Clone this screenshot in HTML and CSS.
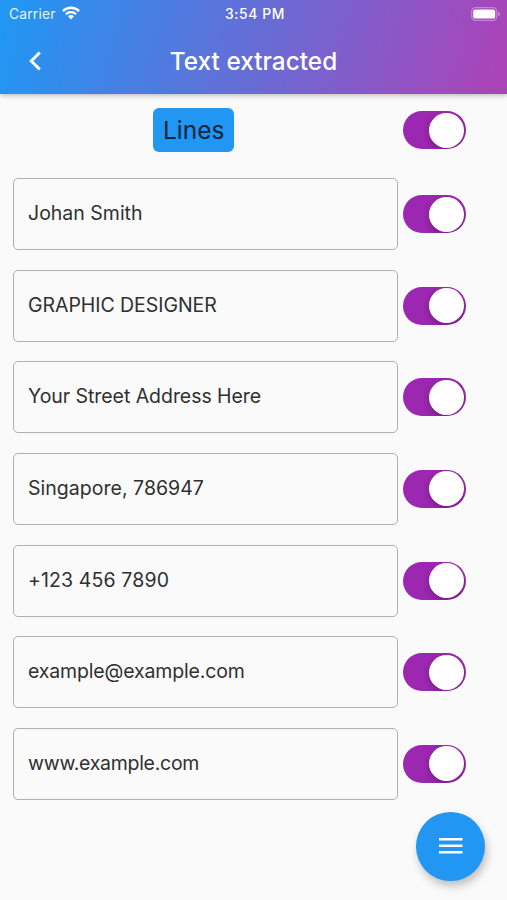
FILE: index.html
```html
<!DOCTYPE html>
<html lang="en">
<head>
<meta charset="utf-8">
<title>Text extracted</title>
<link rel="stylesheet" href="styles.css">
</head>
<body>
<div class="screen">
  <header class="header">
    <div class="status">
      <div class="carrier"><span>Carrier</span>
        <svg class="wifi" width="18" height="14" viewBox="0 0 18 14"><g fill="none" stroke="#fff" stroke-width="2.3"><path d="M.9 5.1a11.5 11.5 0 0 1 16.2 0"/><path d="M3.9 8.3a7.2 7.2 0 0 1 10.2 0"/></g><path fill="#fff" d="M6 10.3a4.2 4.2 0 0 1 6 0L9 13.4z"/></svg>
      </div>
      <span class="time">3:54 PM</span>
      <svg class="battery" width="30" height="14" viewBox="0 0 30 14"><rect x=".7" y=".7" width="25" height="12.6" rx="3.7" fill="none" stroke="#fff" stroke-opacity=".35" stroke-width="1.2"/><rect x="2.2" y="2.4" width="22" height="9.2" rx="2.2" fill="#fff"/><path d="M27.2 4.8c2.5.8 2.5 3.6 0 4.4z" fill="#fff" fill-opacity=".4"/></svg>
    </div>
    <div class="titlebar">
      <svg class="back" width="14" height="20" viewBox="0 0 14 20"><path d="M11.8 1.5 3.3 10l8.5 8.5" fill="none" stroke="#fff" stroke-width="3"/></svg>
      <h1 class="title">Text extracted</h1>
    </div>
  </header>
  <main class="content">
    <div class="row top"><div class="tag-area"><span class="tag">Lines</span></div><span class="toggle"></span></div>
    <div class="row"><div class="field"><span class="name">Johan Smith</span></div><span class="toggle"></span></div>
    <div class="row"><div class="field"><span class="job">GRAPHIC DESIGNER</span></div><span class="toggle"></span></div>
    <div class="row"><div class="field"><span class="street">Your Street Address Here</span></div><span class="toggle"></span></div>
    <div class="row"><div class="field"><span class="city">Singapore, 786947</span></div><span class="toggle"></span></div>
    <div class="row"><div class="field"><span class="phone">+123 456 7890</span></div><span class="toggle"></span></div>
    <div class="row"><div class="field"><span class="email">example@example.com</span></div><span class="toggle"></span></div>
    <div class="row"><div class="field"><span class="site">www.example.com</span></div><span class="toggle"></span></div>
  </main>
  <div class="fab"><svg width="24" height="18" viewBox="0 0 24 18"><path d="M0 2.2h23.5M0 8.7h23.5M0 15.2h23.5" stroke="#fff" stroke-width="2.5"/></svg></div>
</div>
</body>
</html>
```
FILE: styles.css
```css
* { box-sizing: border-box; }
body { margin: 0; font-family: Inter, "Liberation Sans", sans-serif; }
.screen { position: relative; width: 507px; height: 900px; background: #fafafa; overflow: hidden; }
.header {
  position: relative;
  height: 94px;
  background: linear-gradient(105deg, #2196f3 2%, #ae42b7 100%);
  box-shadow: 0 1px 5px rgba(0, 0, 0, .3);
  color: #fff;
}
.status { display: grid; grid-template-columns: 1fr auto 1fr; align-items: center; height: 27px; padding: 0 6px 0 9px; font-size: 13.8px; }
.carrier { display: flex; align-items: center; gap: 6px; letter-spacing: .2px; color: #e6f2ff; }
.wifi { display: block; margin-top: -2px; }
.time { font-weight: 500; letter-spacing: .65px; }
.battery { justify-self: end; }
.titlebar { display: grid; grid-template-columns: 1fr auto 1fr; align-items: center; height: 67px; }
.back { margin-left: 28px; }
.title { margin: 0; font-size: 24.3px; line-height: 30px; font-weight: 500; letter-spacing: .05px; }
.content { padding: 14px 0 0 13px; }
.row { display: flex; align-items: center; gap: 5px; height: 72px; margin-bottom: 19.6px; }
.row.top { height: 44px; margin-bottom: 26.2px; }
.tag-area { width: 385.3px; display: flex; justify-content: center; padding-right: 24px; }
.tag { width: 81px; height: 44px; border-radius: 6px; background: #2196f3; color: #10243a; font-size: 24.5px; line-height: 45px; text-align: center; }
.field { width: 385.3px; height: 72px; padding: 0 14px 2px; display: flex; align-items: center; border: 1.5px solid #b0b0b0; border-radius: 5px; color: #303030; font-size: 19.5px; line-height: 24px; }
.job, .street { letter-spacing: -.05px; }
.city { letter-spacing: .03px; }
.phone { letter-spacing: .12px; }
.email { letter-spacing: -.16px; }
.site { letter-spacing: -.27px; }
.toggle { display: flex; justify-content: flex-end; align-items: center; width: 62.5px; height: 38px; padding-right: 1.5px; border-radius: 19px; background: #9c27b0; overflow: hidden; }
.toggle::after { content: ""; width: 35px; height: 35px; border-radius: 50%; background: #fff; box-shadow: 0 3px 7px rgba(0, 0, 0, .25); }
.fab { position: absolute; left: 416.4px; top: 812px; width: 68.6px; height: 68.6px; border-radius: 50%; display: flex; align-items: center; justify-content: center; background: #2196f3; box-shadow: 2px 5px 8px rgba(0, 0, 0, .24); }
```
